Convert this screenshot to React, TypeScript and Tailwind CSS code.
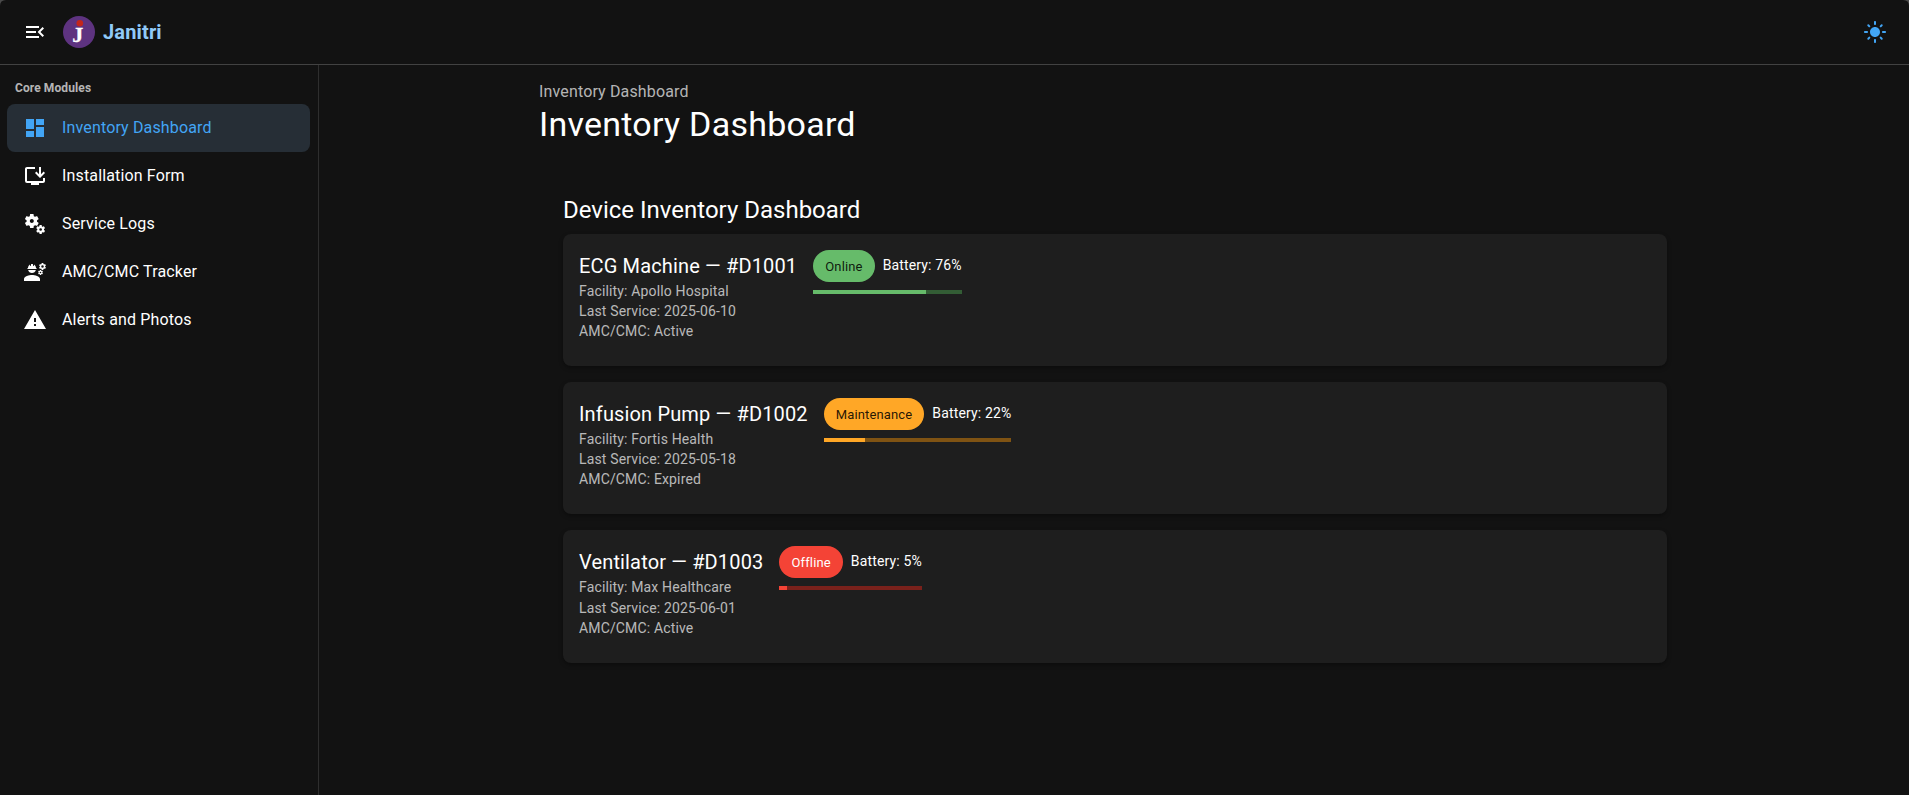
import type { ReactNode } from "react";
import {
  MdDashboard,
  MdEngineering,
  MdInstallDesktop,
  MdLightMode,
  MdMenuOpen,
  MdMiscellaneousServices,
  MdWarning,
} from "react-icons/md";

type Device = {
  name: string;
  id: string;
  facility: string;
  lastService: string;
  contract: string;
  status: string;
  battery: number;
  chip: string;
  track: string;
  fill: string;
};

const devices: Device[] = [
  {
    name: "ECG Machine",
    id: "D1001",
    facility: "Apollo Hospital",
    lastService: "2025-06-10",
    contract: "Active",
    status: "Online",
    battery: 76,
    chip: "bg-[#66bb6a] text-black/87",
    track: "bg-[#335d35]",
    fill: "bg-[#66bb6a]",
  },
  {
    name: "Infusion Pump",
    id: "D1002",
    facility: "Fortis Health",
    lastService: "2025-05-18",
    contract: "Expired",
    status: "Maintenance",
    battery: 22,
    chip: "bg-[#ffa726] text-black/87",
    track: "bg-[#7f5313]",
    fill: "bg-[#ffa726]",
  },
  {
    name: "Ventilator",
    id: "D1003",
    facility: "Max Healthcare",
    lastService: "2025-06-01",
    contract: "Active",
    status: "Offline",
    battery: 5,
    chip: "bg-[#f44336] text-white",
    track: "bg-[#7a211b]",
    fill: "bg-[#f44336]",
  },
];

const navItems: { label: string; icon: ReactNode }[] = [
  { label: "Inventory Dashboard", icon: <MdDashboard size={24} /> },
  { label: "Installation Form", icon: <MdInstallDesktop size={24} /> },
  { label: "Service Logs", icon: <MdMiscellaneousServices size={24} /> },
  { label: "AMC/CMC Tracker", icon: <MdEngineering size={24} /> },
  { label: "Alerts and Photos", icon: <MdWarning size={24} /> },
];

function Logo() {
  return (
    <svg width="32" height="32" viewBox="0 0 32 32">
      <circle cx="16" cy="16" r="16" fill="#5e3380" />
      <circle cx="16.8" cy="7.2" r="3.3" fill="#c3261b" />
      <text
        x="14.7"
        y="26"
        textAnchor="middle"
        fontFamily="'Liberation Serif', serif"
        fontWeight="700"
        fontSize="22"
        fill="#ffffff"
        stroke="#ffffff"
        strokeWidth="0.3"
      >
        J
      </text>
    </svg>
  );
}

function Header() {
  return (
    <header className="flex h-[65px] shrink-0 items-center justify-between border-b border-[#424242] pr-[22px] pl-[23px]">
      <div className="flex items-center">
        <MdMenuOpen size={24} />
        <div className="ml-4 flex items-center gap-2">
          <Logo />
          <span className="text-[20px] leading-8 font-bold tracking-[0.0075em] text-[#90caf9]">Janitri</span>
        </div>
      </div>
      <MdLightMode size={24} className="text-[#42a5f5]" />
    </header>
  );
}

function Sidebar() {
  return (
    <nav className="w-[319px] shrink-0 border-r border-[#2e2e2e] pr-2 pl-[7px]">
      <div className="h-[39px] pt-px pl-2 text-[12px] leading-[44px] font-bold tracking-[0.1px] text-white/70">
        Core Modules
      </div>
      <ul>
        {navItems.map((item, i) => (
          <li
            key={item.label}
            className={
              i === 0
                ? "flex h-12 items-center gap-[15px] rounded-lg bg-[#262e36] pl-4 text-[#42a5f5]"
                : "flex h-12 items-center gap-[15px] rounded-lg pl-4 text-white"
            }
          >
            {item.icon}
            <span className="text-[16px] leading-6 tracking-[0.00938em]">{item.label}</span>
          </li>
        ))}
      </ul>
    </nav>
  );
}

function DeviceCard({ device }: { device: Device }) {
  return (
    <article className="flex items-start gap-4 rounded-lg bg-[#1e1e1e] px-4 pt-4 pb-[25px] shadow-[0_2px_4px_rgba(0,0,0,0.35)]">
      <div>
        <h3 className="h-[31px] text-[20px] leading-8 tracking-[0.0075em]">
          {device.name} — #{device.id}
        </h3>
        <div className="text-[14px] leading-[20.02px] tracking-[0.01071em] text-white/70">
          <p>Facility: {device.facility}</p>
          <p>Last Service: {device.lastService}</p>
          <p>AMC/CMC: {device.contract}</p>
        </div>
      </div>
      <div>
        <div className="flex items-center gap-2">
          <span
            className={`flex h-8 items-center rounded-full px-3 pt-px text-[13px] leading-5 tracking-[0.01071em] ${device.chip}`}
          >
            {device.status}
          </span>
          <span className="pb-[2px] text-[14px] leading-5 tracking-[0.01071em]">Battery: {device.battery}%</span>
        </div>
        <div className={`mt-2 h-1 ${device.track}`}>
          <div className={`h-1 ${device.fill}`} style={{ width: `${device.battery}%` }} />
        </div>
      </div>
    </article>
  );
}

function WindowCorners() {
  return (
    <>
      <svg className="absolute top-0 left-0" width="6" height="6" viewBox="0 0 6 6">
        <path d="M0 0H6Q0 0 0 6Z" fill="#4a4a4a" />
      </svg>
      <svg className="absolute top-0 right-0" width="6" height="6" viewBox="0 0 6 6">
        <path d="M6 0H0Q6 0 6 6Z" fill="#4a4a4a" />
      </svg>
    </>
  );
}

export default function App() {
  return (
    <div className="relative flex h-[795px] flex-col overflow-hidden bg-[#121212] font-['Roboto',sans-serif] text-white">
      <Header />
      <WindowCorners />
      <div className="flex min-h-0 flex-1">
        <Sidebar />
        <main className="min-w-0 flex-1 pl-px">
          <div className="mx-auto w-[1200px] pt-[15px] pr-[23.5px] pl-[24.5px]">
            <p className="text-[16px] leading-6 tracking-[0.00938em] text-white/70">Inventory Dashboard</p>
            <h1 className="text-[34px] leading-[40px] tracking-[0.00735em]">Inventory Dashboard</h1>
            <section className="px-6 pt-[50.4px]">
              <h2 className="mb-2 text-[24px] leading-8 tracking-normal">Device Inventory Dashboard</h2>
              <div className="flex flex-col gap-4">
                {devices.map((d) => (
                  <DeviceCard key={d.id} device={d} />
                ))}
              </div>
            </section>
          </div>
        </main>
      </div>
    </div>
  );
}
